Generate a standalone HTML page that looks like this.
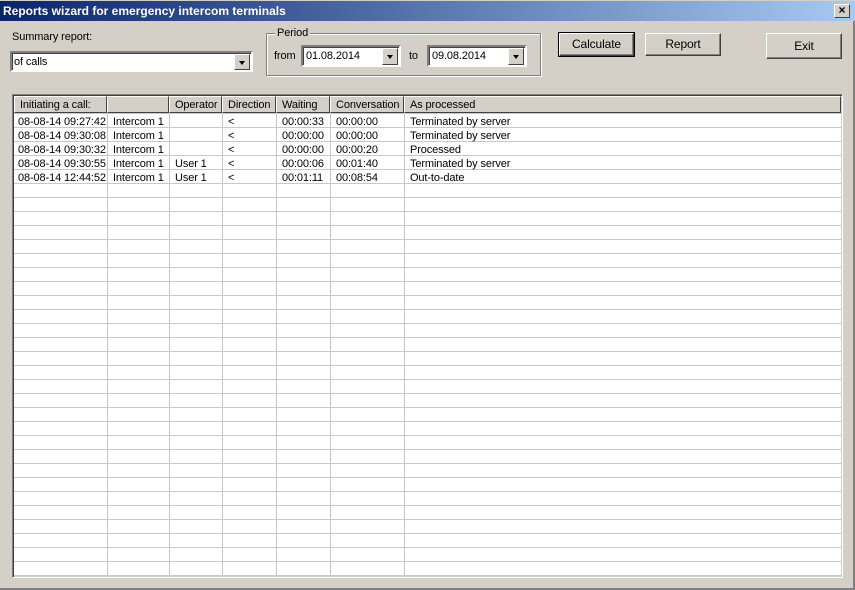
<!DOCTYPE html>
<html><head><meta charset="utf-8"><style>
*{margin:0;padding:0;box-sizing:border-box}
body{width:855px;height:590px;background:#d4d0c8;font-family:"Liberation Sans",Arial,sans-serif;font-size:11px;letter-spacing:-0.12px;color:#000;position:relative;overflow:hidden}
.a{position:absolute}
.title{left:0;top:0;width:855px;height:21px;background:linear-gradient(90deg,#0a246a,#a6caf0);color:#fff;font-weight:bold;font-size:12px;letter-spacing:0;line-height:21px;padding-left:3px;border-top:1px solid #d4d0c8}
.x{left:834px;top:4px;width:16px;height:14px;background:#d4d0c8;border:1px solid;border-color:#fff #404040 #404040 #fff;font-size:12px;line-height:11px;text-align:center;font-weight:bold}
.sunk{background:#fff;border:2px solid;border-color:#808080 #fff #fff #808080;box-shadow:inset 1px 1px 0 #404040}
.dd{position:absolute;right:1px;top:1px;width:16px;height:16px;background:#d4d0c8;border:1px solid;border-color:#fff #404040 #404040 #fff}
.dd:after{content:"";position:absolute;left:4px;top:6px;border:3.5px solid transparent;border-top:4px solid #000;border-bottom:0}
.btn{background:#d4d0c8;border:1px solid;border-color:#fff #404040 #404040 #fff;box-shadow:inset -1px -1px 0 #808080;text-align:center;font-size:12px}
.grp{border:1px solid #808080;box-shadow:1px 1px 0 #fff,inset 1px 1px 0 #fff}
.hd{top:96px;height:17px;background:#d4d0c8;border:1px solid;border-color:#fff #404040 #404040 #fff;padding-left:5px;line-height:16px}
.r{position:absolute;left:0;white-space:nowrap;height:14px;line-height:14px}
.r span{position:absolute;top:0}
.grid{background-color:#fff;background-image:linear-gradient(180deg,transparent 0,transparent 13px,#c8c8c8 13px,#c8c8c8 14px);background-size:100% 14px;background-position:0 1px}
</style></head><body>
<div class="a title">Reports wizard for emergency intercom terminals</div>
<div class="a x">×</div>
<div class="a" style="left:12px;top:31px">Summary report:</div>
<div class="a sunk" style="left:10px;top:51px;width:243px;height:21px;padding-left:2px;line-height:19px">of calls<div class="dd"></div></div>
<div class="a grp" style="left:266px;top:33px;width:275px;height:43px"></div>
<div class="a" style="left:275px;top:27px;background:#d4d0c8;padding:0 2px">Period</div>
<div class="a" style="left:274px;top:50px">from</div>
<div class="a sunk" style="left:301px;top:45px;width:100px;height:22px;padding-left:3px;line-height:19px">01.08.2014<div class="dd" style="height:17px"></div></div>
<div class="a" style="left:409px;top:50px">to</div>
<div class="a sunk" style="left:427px;top:45px;width:100px;height:22px;padding-left:3px;line-height:19px">09.08.2014<div class="dd" style="height:17px"></div></div>
<div class="a btn" style="left:559px;top:33px;width:75px;height:23px;line-height:20px;outline:1px solid #000">Calculate</div>
<div class="a btn" style="left:645px;top:33px;width:76px;height:23px;line-height:20px">Report</div>
<div class="a btn" style="left:766px;top:33px;width:76px;height:26px;line-height:25px">Exit</div>
<div class="a" style="left:12px;top:94px;width:831px;height:484px;border:1px solid;border-color:#808080 #fff #fff #808080;box-shadow:inset 1px 1px 0 #404040"></div>
<div class="a grid" style="left:14px;top:113px;width:827px;height:463px"></div>
<div class="a" style="left:107px;top:113px;width:1px;height:463px;background:#c8c8c8"></div>
<div class="a" style="left:169px;top:113px;width:1px;height:463px;background:#c8c8c8"></div>
<div class="a" style="left:222px;top:113px;width:1px;height:463px;background:#c8c8c8"></div>
<div class="a" style="left:276px;top:113px;width:1px;height:463px;background:#c8c8c8"></div>
<div class="a" style="left:330px;top:113px;width:1px;height:463px;background:#c8c8c8"></div>
<div class="a" style="left:404px;top:113px;width:1px;height:463px;background:#c8c8c8"></div>
<div class="a hd" style="left:14px;width:93px">Initiating a call:</div>
<div class="a hd" style="left:107px;width:62px"></div>
<div class="a hd" style="left:169px;width:53px">Operator</div>
<div class="a hd" style="left:222px;width:54px">Direction</div>
<div class="a hd" style="left:276px;width:54px">Waiting</div>
<div class="a hd" style="left:330px;width:74px">Conversation</div>
<div class="a hd" style="left:404px;width:437px">As processed</div>
<div class="a" style="left:0;top:115px;width:855px">
<div class="r" style="top:0"><span style="left:18px">08-08-14 09:27:42</span><span style="left:113px">Intercom 1</span><span style="left:228px">&lt;</span><span style="left:282px">00:00:33</span><span style="left:336px">00:00:00</span><span style="left:410px">Terminated by server</span></div>
<div class="r" style="top:14px"><span style="left:18px">08-08-14 09:30:08</span><span style="left:113px">Intercom 1</span><span style="left:228px">&lt;</span><span style="left:282px">00:00:00</span><span style="left:336px">00:00:00</span><span style="left:410px">Terminated by server</span></div>
<div class="r" style="top:28px"><span style="left:18px">08-08-14 09:30:32</span><span style="left:113px">Intercom 1</span><span style="left:228px">&lt;</span><span style="left:282px">00:00:00</span><span style="left:336px">00:00:20</span><span style="left:410px">Processed</span></div>
<div class="r" style="top:42px"><span style="left:18px">08-08-14 09:30:55</span><span style="left:113px">Intercom 1</span><span style="left:175px">User 1</span><span style="left:228px">&lt;</span><span style="left:282px">00:00:06</span><span style="left:336px">00:01:40</span><span style="left:410px">Terminated by server</span></div>
<div class="r" style="top:56px"><span style="left:18px">08-08-14 12:44:52</span><span style="left:113px">Intercom 1</span><span style="left:175px">User 1</span><span style="left:228px">&lt;</span><span style="left:282px">00:01:11</span><span style="left:336px">00:08:54</span><span style="left:410px">Out-to-date</span></div>
</div>
<div class="a" style="left:0;top:588px;width:855px;height:2px;background:#808080"></div>
<div class="a" style="left:853px;top:21px;width:2px;height:569px;background:#808080"></div>
</body></html>
